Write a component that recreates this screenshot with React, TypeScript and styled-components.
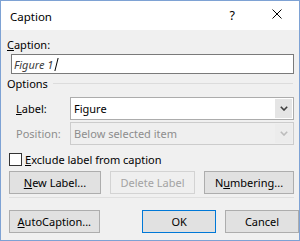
import React from 'react';
import styled, { createGlobalStyle } from 'styled-components';

const Global = createGlobalStyle`
  html, body { margin: 0; padding: 0; background: #ffffff; }
  * { box-sizing: border-box; }
`;

const Dialog = styled.div`
  width: 300px;
  height: 241px;
  border: 1px solid #7ea2d4;
  background: #f0f0f0;
  display: flex;
  flex-direction: column;
  font-family: "Noto Sans", "Liberation Sans", sans-serif;
  font-size: 11px;
  line-height: 15px;
  color: #000000;
`;

const TitleBar = styled.div`
  height: 29px;
  background: #ffffff;
  display: flex;
  align-items: center;
  padding-left: 9px;
`;

const Title = styled.div`
  flex: 1;
  font-size: 11.5px;
  padding-top: 2px;
`;

const Help = styled.div`
  font-size: 12.5px;
  margin-right: 37px;
  padding-bottom: 1px;
`;

const CloseIcon = styled.svg`
  width: 10px;
  height: 10px;
  margin-right: 17px;
  margin-bottom: 3px;
`;

const Body = styled.div`
  flex: 1;
  display: flex;
  flex-direction: column;
  padding-left: 7px;
`;

const U = styled.span`
  text-decoration: underline;
  text-underline-offset: 1px;
`;

const FieldLabel = styled.div`
  margin-top: 7px;
  margin-left: -1px;
`;

const TextInput = styled.div`
  margin-top: 2px;
  margin-left: 3px;
  width: 283px;
  height: 20px;
  border: 1px solid #7a7a7a;
  background: #ffffff;
  display: flex;
  align-items: center;
  padding-left: 2px;
  font-style: italic;
  color: #404040;
`;

const Caret = styled.span`
  display: inline-block;
  width: 1px;
  height: 13px;
  background: #000000;
  margin-left: 3px;
  transform: skewX(-14deg);
`;

const GroupHeader = styled.div`
  margin-top: 2px;
  margin-left: -1px;
  display: flex;
  align-items: center;
  width: 286px;
`;

const GroupLine = styled.div`
  flex: 1;
  height: 1px;
  background: #dcdcdc;
  margin-left: 5px;
`;

const SelectRow = styled.div<{ $top: number }>`
  margin-top: ${(p) => p.$top}px;
  margin-left: 8px;
  display: flex;
  align-items: center;
`;

const SelectLabel = styled.div<{ $disabled?: boolean }>`
  width: 54px;
  color: ${(p) => (p.$disabled ? '#8d8d8d' : '#000000')};
`;

const Select = styled.div<{ $disabled?: boolean }>`
  width: 224px;
  height: 23px;
  border: 1px solid ${(p) => (p.$disabled ? '#cccccc' : '#acacac')};
  background: ${(p) => (p.$disabled ? '#efefef' : '#ffffff')};
  display: flex;
  align-items: stretch;
`;

const SelectValue = styled.div<{ $disabled?: boolean }>`
  flex: 1;
  display: flex;
  align-items: center;
  padding-left: 3px;
  color: ${(p) => (p.$disabled ? '#8d8d8d' : '#000000')};
`;

const DropButton = styled.div<{ $disabled?: boolean }>`
  width: 17px;
  margin: 1px;
  background: ${(p) => (p.$disabled ? '#ececec' : '#e5e5e5')};
  display: flex;
  align-items: center;
  justify-content: center;
`;

const CheckRow = styled.div`
  margin-top: 8px;
  margin-left: 1px;
  display: flex;
  align-items: center;
  height: 13px;
`;

const CheckBox = styled.div`
  width: 13px;
  height: 13px;
  border: 1px solid #333333;
  background: #ffffff;
  margin-right: 3px;
`;

const ButtonRow = styled.div<{ $top: number }>`
  margin-top: ${(p) => p.$top}px;
  margin-left: 1px;
  display: flex;
  gap: 9px;
`;

const Spacer = styled.div`
  width: 25px;
`;

const Button = styled.div<{ $w: number; $disabled?: boolean; $default?: boolean }>`
  width: ${(p) => p.$w}px;
  height: 23px;
  border: 1px solid
    ${(p) => (p.$default ? '#0078d7' : p.$disabled ? '#d3d3d3' : '#adadad')};
  background: ${(p) => (p.$disabled ? '#efefef' : '#e1e1e1')};
  color: ${(p) => (p.$disabled ? '#a3a3a3' : '#000000')};
  display: flex;
  align-items: center;
  justify-content: center;
`;

const Separator = styled.div`
  margin-top: 3px;
  margin-left: 1px;
  width: 285px;
  height: 1px;
  background: #dfdfdf;
`;

const Chevron: React.FC<{ color: string }> = ({ color }) => (
  <svg width="8" height="5" viewBox="0 0 8 5">
    <path d="M0.8 0.8 L4 4 L7.2 0.8" fill="none" stroke={color} strokeWidth="1.6" />
  </svg>
);

export default function App() {
  return (
    <>
      <Global />
      <Dialog>
        <TitleBar>
          <Title>Caption</Title>
          <Help>?</Help>
          <CloseIcon viewBox="0 0 10 10">
            <path d="M0.5 0.5 L9.5 9.5 M9.5 0.5 L0.5 9.5" stroke="#000" strokeWidth="1" />
          </CloseIcon>
        </TitleBar>
        <Body>
          <FieldLabel>
            <U>C</U>aption:
          </FieldLabel>
          <TextInput>
            Figure 1<Caret />
          </TextInput>
          <GroupHeader>
            Options
            <GroupLine />
          </GroupHeader>
          <SelectRow $top={6}>
            <SelectLabel>
              <U>L</U>abel:
            </SelectLabel>
            <Select>
              <SelectValue>Figure</SelectValue>
              <DropButton>
                <Chevron color="#404040" />
              </DropButton>
            </Select>
          </SelectRow>
          <SelectRow $top={2}>
            <SelectLabel $disabled>Position:</SelectLabel>
            <Select $disabled>
              <SelectValue $disabled>Below selected item</SelectValue>
              <DropButton $disabled>
                <Chevron color="#bcbcbc" />
              </DropButton>
            </Select>
          </SelectRow>
          <CheckRow>
            <CheckBox />
            <span>
              <U>E</U>xclude label from caption
            </span>
          </CheckRow>
          <ButtonRow $top={5}>
            <Button $w={92}>
              <span>
                <U>N</U>ew Label...
              </span>
            </Button>
            <Button $w={85} $disabled>
              Delete Label
            </Button>
            <Button $w={90}>
              <span>
                N<U>u</U>mbering...
              </span>
            </Button>
          </ButtonRow>
          <Separator />
          <ButtonRow $top={12}>
            <Button $w={92}>
              <span>
                <U>A</U>utoCaption...
              </span>
            </Button>
            <Spacer />
            <Button $w={75} $default>
              OK
            </Button>
            <Button $w={75}>Cancel</Button>
          </ButtonRow>
        </Body>
      </Dialog>
    </>
  );
}
